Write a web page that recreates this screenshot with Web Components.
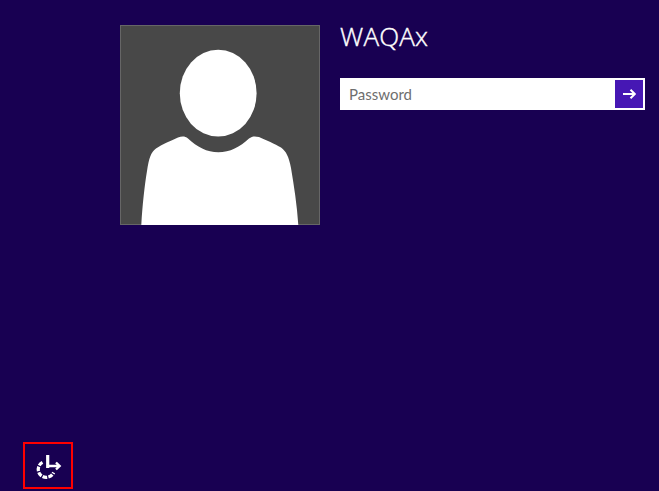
<!DOCTYPE html>
<html>
<head>
<meta charset="utf-8">
<title>Sign in</title>
<style>
    html, body { height: 100%; }
    body {
        margin: 0;
        background: #180052;
        overflow: hidden;
    }
</style>
</head>
<body>
<login-screen>
    <user-avatar slot="avatar"></user-avatar>
    <span slot="name">WAQAx</span>
    <password-box slot="password" placeholder="Password"></password-box>
    <power-button slot="footer"></power-button>
</login-screen>

<script>
class LoginScreen extends HTMLElement {
    constructor() {
        super();
        this.attachShadow({ mode: 'open' }).innerHTML = `
            <style>
                :host {
                    display: flex;
                    flex-direction: column;
                    justify-content: space-between;
                    box-sizing: border-box;
                    height: 491px;
                    padding: 25px 14px 2px 23px;
                }
                .top {
                    display: flex;
                    gap: 20px;
                    padding-left: 97px;
                }
                .info {
                    flex: 1;
                    display: flex;
                    flex-direction: column;
                }
                .name {
                    height: 53px;
                    font: 300 26px/23px "Open Sans", sans-serif;
                    letter-spacing: 0.2px;
                    -webkit-text-stroke: 0.4px #fff;
                    color: #fff;
                }
            </style>
            <div class="top">
                <slot name="avatar"></slot>
                <div class="info">
                    <div class="name"><slot name="name"></slot></div>
                    <slot name="password"></slot>
                </div>
            </div>
            <slot name="footer"></slot>
        `;
    }
}

class UserAvatar extends HTMLElement {
    constructor() {
        super();
        this.attachShadow({ mode: 'open' }).innerHTML = `
            <style>
                :host {
                    display: block;
                    box-sizing: border-box;
                    width: 200px;
                    height: 200px;
                    background: #484848;
                    border: 1px solid #666;
                }
                svg { display: block; overflow: visible; }
            </style>
            <svg width="198" height="198" viewBox="121 26 198 198">
                <ellipse cx="218.2" cy="93.2" rx="38.4" ry="43.4" fill="#fff"/>
                <path fill="#fff" d="M141.3 225 C142.5 205 144.5 186 147 171 C149 158 151 152 156 148.5 C162 144.5 170 141 178 137.5 C182 136 185 136 188 138.5 C197 147 207 152.3 218.3 152.3 C230 152.3 240 147 249 138.5 C252 136 255 136 259 137 C266 140 275 144 281 147.5 C286 151 289 157 291 168 C294 186 297 205 298.3 225 Z"/>
            </svg>
        `;
    }
}

class PasswordBox extends HTMLElement {
    constructor() {
        super();
        this.attachShadow({ mode: 'open' }).innerHTML = `
            <style>
                :host {
                    display: flex;
                    align-items: center;
                    box-sizing: border-box;
                    height: 32px;
                    padding: 2px;
                    background: #fff;
                }
                .hint {
                    flex: 1;
                    padding-left: 7px;
                    font: 400 15px/30px Lato, sans-serif;
                    color: #6e6e6e;
                }
                button {
                    display: flex;
                    align-items: center;
                    justify-content: center;
                    width: 28px;
                    height: 28px;
                    padding: 0;
                    border: 0;
                    background: #4617b4;
                }
                svg { display: block; }
            </style>
            <span class="hint"></span>
            <button>
                <svg width="13" height="10" viewBox="0 0 13 10" fill="none" stroke="#fff" stroke-width="2">
                    <path d="M0 5H11.5M7.5 0.7L11.8 5L7.5 9.3"/>
                </svg>
            </button>
        `;
        this.shadowRoot.querySelector('.hint').textContent = this.getAttribute('placeholder');
    }
}

class PowerButton extends HTMLElement {
    constructor() {
        super();
        this.attachShadow({ mode: 'open' }).innerHTML = `
            <style>
                :host {
                    display: flex;
                    align-items: center;
                    justify-content: center;
                    box-sizing: border-box;
                    width: 50px;
                    height: 47px;
                    border: 2px solid #f00;
                }
                svg { display: block; }
            </style>
            <svg width="30" height="31" viewBox="0 0 30 31" fill="none" stroke="#fff">
                <path stroke-width="3.2" stroke-dasharray="4.6 1.2" d="M9.5 12.3A8 8 0 1 0 20.6 22.5"/>
                <path stroke-width="3.2" d="M14.7 5V18"/>
                <path stroke-width="2.4" d="M15 16H26.5M23 12.5L26.6 16L23 19.5"/>
            </svg>
        `;
    }
}

customElements.define('login-screen', LoginScreen);
customElements.define('user-avatar', UserAvatar);
customElements.define('password-box', PasswordBox);
customElements.define('power-button', PowerButton);
</script>
</body>
</html>
